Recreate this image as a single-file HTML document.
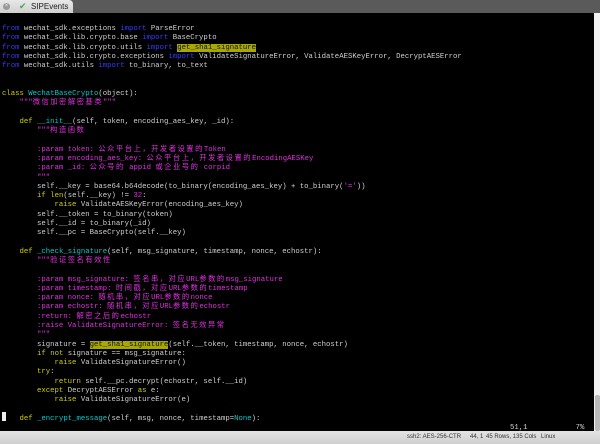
<!DOCTYPE html>
<html><head><meta charset="utf-8"><style>
body{margin:0;width:600px;height:444px;overflow:hidden;background:#000;position:relative;font-family:"Liberation Sans",sans-serif}
#tabs{position:absolute;left:0;top:0;width:600px;height:13px;background:#5a5a5a}
#tab{position:absolute;left:0;top:0;width:73px;height:13px;background:linear-gradient(#e8e8e8,#cfcfcf);border-radius:0 4px 0 0;font-size:8px;color:#222;line-height:13px}
#term{position:absolute;left:0;top:13px;width:594px;height:418px;background:#000}
pre{position:absolute;left:2px;top:12px;margin:0;font-family:"Liberation Mono","Noto Sans CJK SC",monospace;font-size:7.3px;line-height:9.28px;color:#d0d0d0;white-space:pre}
.k{color:#3a3aff}.y{color:#d0d000}.c{color:#00cccc}.m{color:#e030e0}.h{background:#a8a800;color:#111}
.z{letter-spacing:1.5px}
#sb{position:absolute;left:594px;top:13px;width:6px;height:418px;background:#f2f2f2}
#thumb{position:absolute;left:595px;top:395px;width:5px;height:36px;background:#bbb;border-radius:2px}
#status{position:absolute;left:0;top:431px;width:600px;height:13px;background:linear-gradient(#e4e4e4,#cfcfcf);font-size:6px;color:#333;line-height:13px}
#cur{position:absolute;left:2px;top:412px;width:4px;height:9px;background:#eee}
</style></head><body>
<div id="tabs"><div id="tab"><span style="position:absolute;left:3px;top:3px;width:7px;height:7px;border-radius:50%;background:#999;color:#eee;font-size:6px;line-height:7px;text-align:center">×</span><span style="position:absolute;left:19px;color:#4a4;font-size:9px">✔</span><span style="position:absolute;left:31px">SIPEvents</span></div></div>
<div id="term">
<pre><span class="k">from</span> wechat_sdk.exceptions <span class="k">import</span> ParseError
<span class="k">from</span> wechat_sdk.lib.crypto.base <span class="k">import</span> BaseCrypto
<span class="k">from</span> wechat_sdk.lib.crypto.utils <span class="k">import</span> <span class="h">get_sha1_signature</span>
<span class="k">from</span> wechat_sdk.lib.crypto.exceptions <span class="k">import</span> ValidateSignatureError, ValidateAESKeyError, DecryptAESError
<span class="k">from</span> wechat_sdk.utils <span class="k">import</span> to_binary, to_text


<span class="y">class</span> <span class="c">WechatBaseCrypto</span>(object):
    <span class="m">"""<span class="z">微信加密解密基类</span>"""</span>

    <span class="y">def</span> <span class="c">__init__</span>(self, token, encoding_aes_key, _id):
        <span class="m">"""<span class="z">构造函数</span></span>

<span class="m">        :param token: <span class="z">公众平台上，开发者设置的</span>Token</span>
<span class="m">        :param encoding_aes_key: <span class="z">公众平台上，开发者设置的</span>EncodingAESKey</span>
<span class="m">        :param _id: <span class="z">公众号的</span> appid <span class="z">或企业号的</span> corpid</span>
<span class="m">        """</span>
        self.__key = base64.b64decode(to_binary(encoding_aes_key) + to_binary(<span class="m">'='</span>))
        <span class="y">if</span> <span class="y">len</span>(self.__key) != <span class="m">32</span>:
            <span class="y">raise</span> ValidateAESKeyError(encoding_aes_key)
        self.__token = to_binary(token)
        self.__id = to_binary(_id)
        self.__pc = BaseCrypto(self.__key)

    <span class="y">def</span> <span class="c">_check_signature</span>(self, msg_signature, timestamp, nonce, echostr):
        <span class="m">"""<span class="z">验证签名有效性</span></span>

<span class="m">        :param msg_signature: <span class="z">签名串，对应</span>URL<span class="z">参数的</span>msg_signature</span>
<span class="m">        :param timestamp: <span class="z">时间戳，对应</span>URL<span class="z">参数的</span>timestamp</span>
<span class="m">        :param nonce: <span class="z">随机串，对应</span>URL<span class="z">参数的</span>nonce</span>
<span class="m">        :param echostr: <span class="z">随机串，对应</span>URL<span class="z">参数的</span>echostr</span>
<span class="m">        :return: <span class="z">解密之后的</span>echostr</span>
<span class="m">        :raise ValidateSignatureError: <span class="z">签名无效异常</span></span>
<span class="m">        """</span>
        signature = <span class="h">get_sha1_signature</span>(self.__token, timestamp, nonce, echostr)
        <span class="y">if</span> <span class="y">not</span> signature == msg_signature:
            <span class="y">raise</span> ValidateSignatureError()
        <span class="y">try</span>:
            <span class="y">return</span> self.__pc.decrypt(echostr, self.__id)
        <span class="y">except</span> DecryptAESError <span class="y">as</span> e:
            <span class="y">raise</span> ValidateSignatureError(e)

    <span class="y">def</span> <span class="c">_encrypt_message</span>(self, msg, nonce, timestamp=<span class="c">None</span>):
                                                                                                                    51,1           7%</pre>
</div>
<div id="cur"></div>
<div id="sb"></div><div id="thumb"></div>
<div id="status"><span style="position:absolute;left:407px">ssh2: AES-256-CTR</span><span style="position:absolute;left:470px">44, 1</span><span style="position:absolute;left:486px">45 Rows, 135 Cols</span><span style="position:absolute;left:541px">Linux</span></div>
</body></html>
